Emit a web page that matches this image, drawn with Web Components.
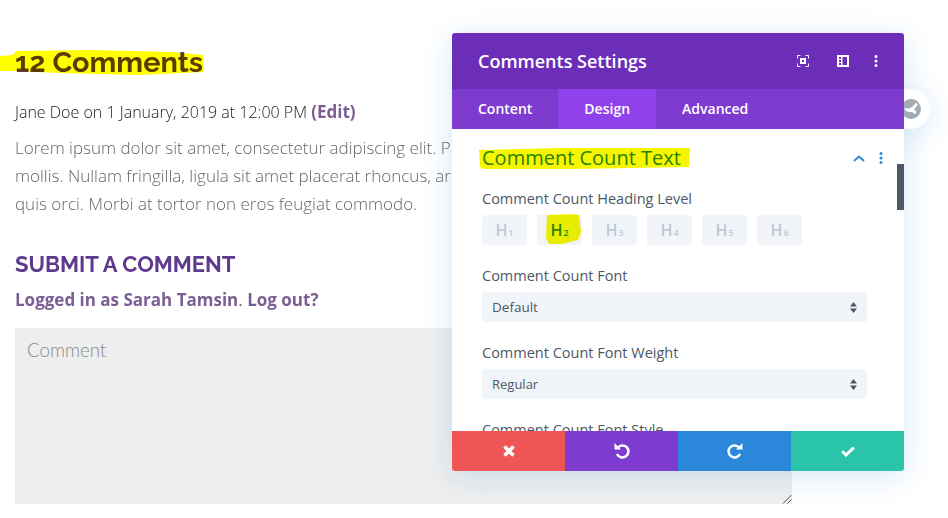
<!DOCTYPE html>
<html lang="en">
<head>
<meta charset="utf-8">
<title>Comments Settings</title>
<style>
  html, body { margin: 0; padding: 0; background: #fff; }
  body { width: 948px; height: 518px; overflow: hidden; position: relative; font-family: "Open Sans", sans-serif; }
</style>
</head>
<body>
<comments-page></comments-page>
<settings-modal></settings-modal>

<script>
// Left side of the page: the comments module under the modal
class CommentsPage extends HTMLElement {
  constructor() {
    super();
    this.attachShadow({ mode: 'open' });
  }

  connectedCallback() {
    this.shadowRoot.innerHTML = `
      <style>
        :host { display: block; padding: 44px 0 0 15px; color: #666; font-family: "Open Sans", sans-serif; }
        h2, h3, p { margin: 0; font-weight: normal; }
        .count { position: relative; font: 700 28.8px/36px Raleway, Lato, sans-serif; color: #5f3a8c; white-space: nowrap; }
        .mark { position: absolute; left: -15px; top: -44px; mix-blend-mode: multiply; }
        .meta { margin-top: 20px; font-size: 16px; line-height: 24px; font-weight: 300; color: #222; white-space: nowrap; }
        .meta b { font-size: 17px; }
        .meta b, .logged { color: #7c5e94; font-weight: 700; }
        .text { margin-top: 10px; font-size: 17px; line-height: 28px; font-weight: 300; white-space: nowrap; }
        .reply { margin-top: 30px; font: 700 22px/32px Raleway, Lato, sans-serif; color: #5f3a8c; white-space: nowrap; }
        .logged { margin-top: 8px; font-size: 17px; line-height: 24px; }
        .logged i { font-style: normal; font-weight: 400; color: #666; }
        .box { position: relative; margin-top: 16px; width: 777px; height: 176px; box-sizing: border-box; padding: 10px 12px; background: #eee; font: 300 18.7px/24px Lato, sans-serif; color: #888; }
        .grip { position: absolute; right: 0; bottom: 0; }
      </style>
      <h2 class="count">12 Comments
        <svg class="mark" width="220" height="90" viewBox="0 0 220 90"><path fill="#ffff00" d="M0 56 L13 55 L16 51 L90 50 L172 52 L203 55 L204 72 L140 75 L60 73 L14 71 L0 71Z"/></svg>
      </h2>
      <p class="meta">Jane Doe on 1 January, 2019 at 12:00 PM <b>(Edit)</b></p>
      <p class="text">Lorem ipsum dolor sit amet, consectetur adipiscing elit. Phasellus auctor urna eleifend diam<br>mollis. Nullam fringilla, ligula sit amet placerat rhoncus, arcu nisi fermentum lectus, sed<br>quis orci. Morbi at tortor non eros feugiat commodo.</p>
      <h3 class="reply">SUBMIT A COMMENT</h3>
      <p class="logged">Logged in as Sarah Tamsin<i>.</i> Log out?</p>
      <div class="box">Comment
        <svg class="grip" width="10" height="10" viewBox="0 0 10 10"><path d="M1 9.500 9.500 1M5.500 9.500 9.500 5.500" stroke="#555" fill="none"/></svg>
      </div>
    `;
  }
}

// One of the round-cornered H1..H6 buttons
class HeadingButton extends HTMLElement {
  constructor() {
    super();
    this.attachShadow({ mode: 'open' });
  }

  connectedCallback() {
    const level = this.getAttribute('level') || '1';
    this.shadowRoot.innerHTML = `
      <style>
        :host { display: flex; align-items: center; justify-content: center; width: 45px; height: 30px; border-radius: 3px; background: #f1f5f9; color: #bec9d5; font-size: 16px; font-weight: 600; }
        :host([active]) { color: #2b87da; }
        small { font-size: 9px; margin: 3px 0 0 1px; }
      </style>
      <span>H<small>${level}</small></span>
    `;
  }
}

// Fake select box with the small up/down arrows
class SelectField extends HTMLElement {
  constructor() {
    super();
    this.attachShadow({ mode: 'open' });
  }

  connectedCallback() {
    this.shadowRoot.innerHTML = `
      <style>
        :host { display: block; margin-bottom: 21px; }
        label { display: block; font-size: 14.5px; line-height: 20px; font-weight: 500; color: #4c5866; margin-bottom: 6px; white-space: nowrap; }
        .field { display: flex; align-items: center; justify-content: space-between; height: 30px; padding: 0 10px; border-radius: 3px; background: #f1f5f9; font-size: 13.5px; font-weight: 500; color: #4c5866; }
        :host([muted]) .field { font-size: 13px; font-weight: 400; }
      </style>
      <label>${this.getAttribute('label') || ''}</label>
      <div class="field"><span><slot></slot></span>
        <svg width="7" height="11" viewBox="0 0 7 11"><path fill="#4c5866" d="M3.500 0 7 4.400H0ZM0 6.600H7L3.500 11Z"/></svg>
      </div>
    `;
  }
}

// The Divi style settings modal
class SettingsModal extends HTMLElement {
  constructor() {
    super();
    this.attachShadow({ mode: 'open' });
  }

  connectedCallback() {
    this.shadowRoot.innerHTML = `
      <style>
        :host { position: absolute; left: 452px; top: 33px; width: 452px; height: 438px; display: flex; flex-direction: column; border-radius: 3px; background: #fff; box-shadow: 0 5px 30px rgba(43,135,218,.2); font-family: "Open Sans", sans-serif; color: #fff; }
        .globe { position: absolute; left: 438px; top: 56px; width: 40px; height: 40px; border-radius: 50%; background: #fff; display: flex; align-items: center; justify-content: center; box-shadow: 0 5px 30px rgba(43,135,218,.2); }
        header, nav, main, footer { position: relative; }
        header { display: flex; align-items: center; height: 56px; padding-left: 26px; background: #6c2eb9; border-radius: 3px 3px 0 0; }
        h1 { margin: 0; flex: 1; font-size: 18px; font-weight: 600; }
        .tools { display: flex; align-items: center; }
        .tools svg { display: block; }
        nav { display: flex; height: 40px; background: #7e3bd0; font-size: 14px; font-weight: 600; line-height: 40px; }
        nav span { padding: 0 26px; }
        nav .on { background: #8f42ec; }
        main { flex: 1; overflow: hidden; background: #fff; padding: 15px 37px 0 30px; }
        .toggle { display: flex; align-items: center; justify-content: space-between; height: 26px; margin-bottom: 19px; color: #2b87da; font-size: 20px; white-space: nowrap; }
        .toggle svg { display: block; position: relative; top: 1px; }
        .toggle div { display: flex; align-items: center; gap: 14px; margin-right: -16px; }
        .lvl { font-size: 14.5px; line-height: 20px; font-weight: 500; color: #4c5866; margin-bottom: 6px; white-space: nowrap; }
        .levels { display: flex; gap: 10px; margin-bottom: 21px; }
        .mark { position: absolute; left: 0; top: 19px; mix-blend-mode: multiply; pointer-events: none; }
        .thumb { position: absolute; right: 0; top: 35px; width: 7px; height: 46px; background: #4c5866; }
        footer { display: flex; height: 40px; }
        footer div { flex: 1; display: flex; align-items: center; justify-content: center; }
        footer div:first-child { border-radius: 0 0 0 3px; }
        footer div:last-child { border-radius: 0 0 3px 0; }
      </style>
      <div class="globe">
        <svg style="margin-left:2px" width="20" height="20" viewBox="0 0 20 20"><circle cx="10" cy="10" r="10" fill="#a3abb3"/><path fill="#fff" d="M3 9 8 9.500 11 8 15 4 17 5 15 8 13 10 15.500 13 14 15 11 13 8 13 5 12Z"/></svg>
      </div>
      <header>
        <h1>Comments Settings</h1>
        <div class="tools">
          <svg width="12" height="12" viewBox="0 0 12 12" fill="none" stroke="#fff"><path d="M.5 3.500V.5H3.500M8.500.5H11.500V3.500M11.500 8.500V11.500H8.500M3.500 11.500H.5V8.500"/><rect x="4" y="4" width="4" height="4" stroke-width="2"/></svg>
          <svg style="margin-left:28px" width="12" height="12" viewBox="0 0 12 12"><path fill="#fff" fill-rule="evenodd" d="M0 0H12V12H0ZM2 2V4H4V2ZM2 5V7H4V5ZM2 8V10H4V8ZM5.500 2V10H10V2Z"/></svg>
          <svg style="margin:0 26px 0 25px" width="4" height="12" viewBox="0 0 4 12"><g fill="#fff"><circle cx="2" cy="1.500" r="1.500"/><circle cx="2" cy="6" r="1.500"/><circle cx="2" cy="10.500" r="1.500"/></g></svg>
        </div>
      </header>
      <nav><span>Content</span><span class="on">Design</span><span>Advanced</span></nav>
      <main>
        <div class="toggle">
          <span>Comment Count Text</span>
          <div>
            <svg width="12" height="7" viewBox="0 0 12 7" fill="none" stroke="#2b87da" stroke-width="2"><path d="M1 6 6 1.500 11 6"/></svg>
            <svg width="4" height="12" viewBox="0 0 4 12"><g fill="#2b87da"><circle cx="2" cy="1.500" r="1.500"/><circle cx="2" cy="6" r="1.500"/><circle cx="2" cy="10.500" r="1.500"/></g></svg>
          </div>
        </div>
        <div class="lvl">Comment Count Heading Level</div>
        <div class="levels">
          <heading-button level="1"></heading-button>
          <heading-button level="2" active></heading-button>
          <heading-button level="3"></heading-button>
          <heading-button level="4"></heading-button>
          <heading-button level="5"></heading-button>
          <heading-button level="6"></heading-button>
        </div>
        <select-field label="Comment Count Font">Default</select-field>
        <select-field label="Comment Count Font Weight" muted>Regular</select-field>
        <select-field label="Comment Count Font Style"></select-field>
        <svg class="mark" width="452" height="120" viewBox="0 0 452 120"><path fill="#f6f600" d="M27 2 110 0 238 0 237 19 120 21 32 21 28 19Z"/><path fill="#f6f600" d="M95 67 120 66 127 67 129 84 126 92 110 96 97 96 94 90Z"/></svg>
        <div class="thumb"></div>
      </main>
      <footer>
        <div style="background:#ef5555"><svg width="12" height="12" viewBox="0 0 12 12"><path fill="none" stroke="#fff" stroke-width="3.600" d="M1.500 1.500 10.500 10.500M10.500 1.500 1.500 10.500"/></svg></div>
        <div style="background:#7e3bd0"><svg width="16" height="16" viewBox="0 0 16 16" fill="none"><path d="M3.500 5A6 6 0 1 1 3 11" stroke="#fff" stroke-width="2.500"/><path fill="#fff" d="M.5 0 7 6.500H.5Z"/></svg></div>
        <div style="background:#2b87da"><svg width="16" height="16" viewBox="0 0 16 16" fill="none"><path d="M12.500 5A6 6 0 1 0 13 11" stroke="#fff" stroke-width="2.500"/><path fill="#fff" d="M15.500 0 9 6.500H15.500Z"/></svg></div>
        <div style="background:#29c4a9"><svg width="14" height="11" viewBox="0 0 14 11"><path fill="none" stroke="#fff" stroke-width="3" d="M1.200 5.300 5 9 12.800 1.500"/></svg></div>
      </footer>
    `;
  }
}

customElements.define('comments-page', CommentsPage);
customElements.define('heading-button', HeadingButton);
customElements.define('select-field', SelectField);
customElements.define('settings-modal', SettingsModal);
</script>
</body>
</html>
